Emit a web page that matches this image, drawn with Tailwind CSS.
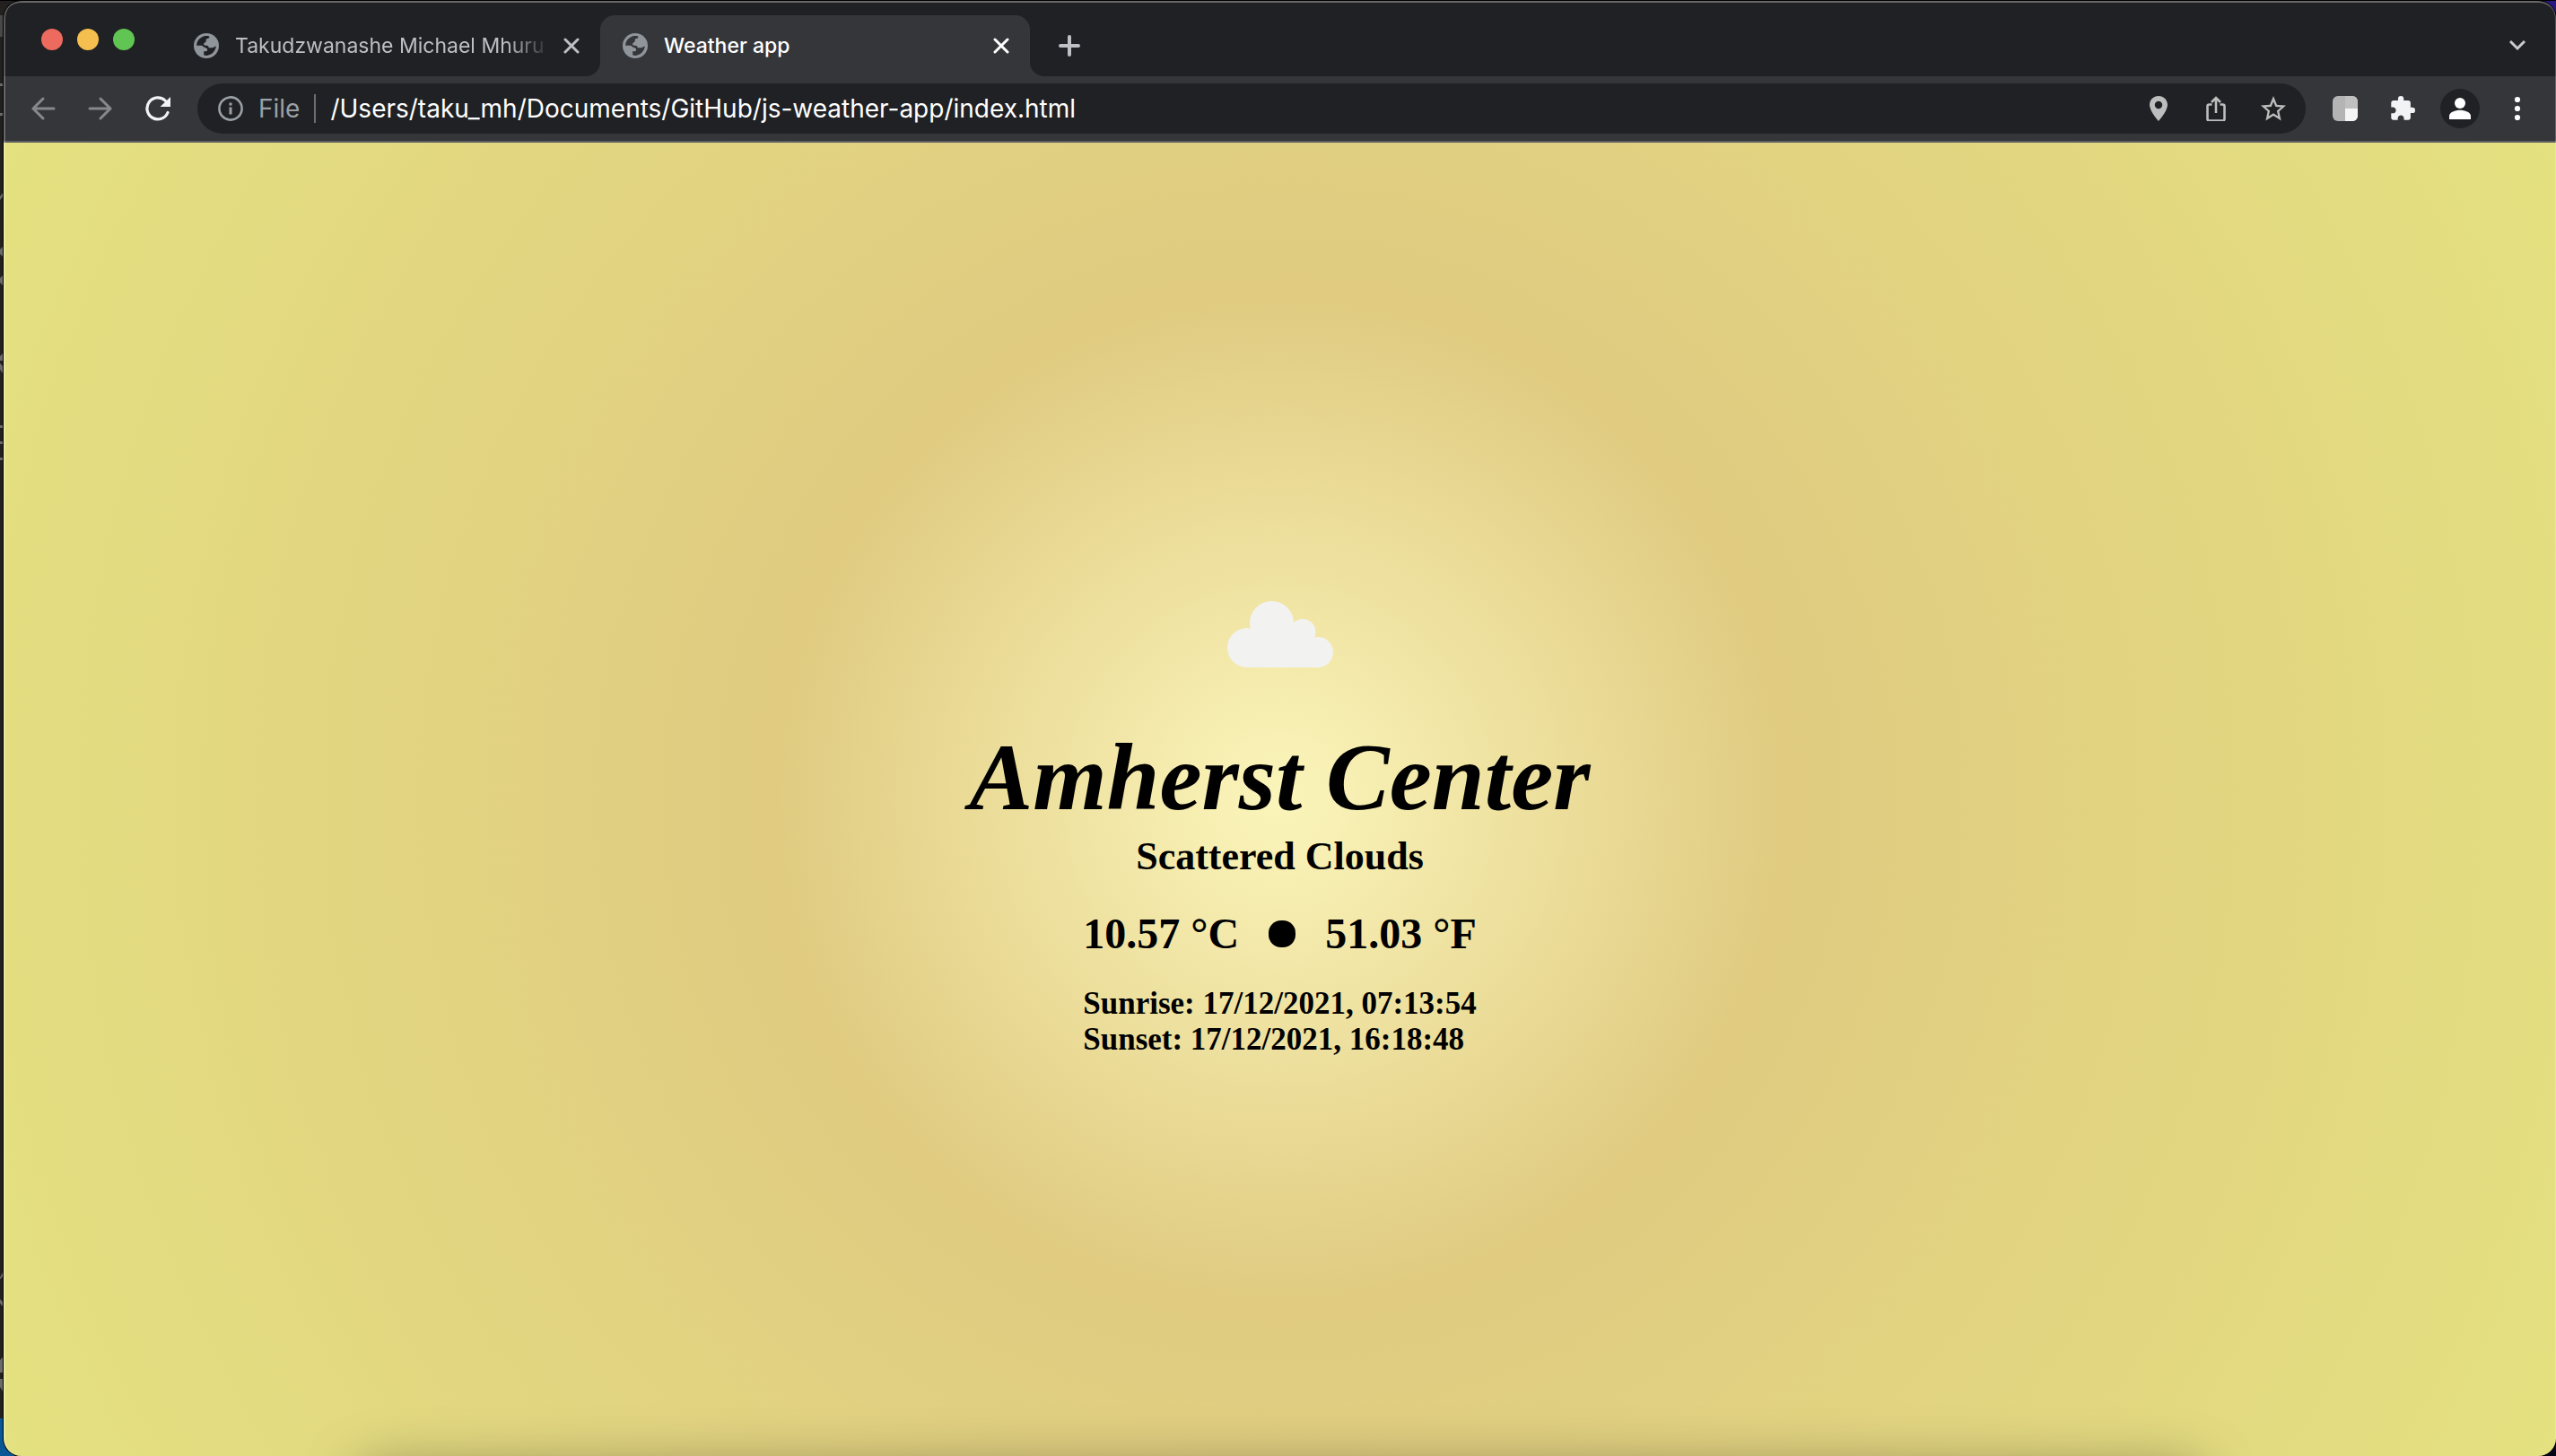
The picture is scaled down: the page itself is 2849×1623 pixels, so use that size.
<!DOCTYPE html>
<html lang="en">
<head>
<meta charset="utf-8">
<title>Weather app</title>
<script src="https://cdn.jsdelivr.net/npm/@tailwindcss/browser@4"></script>
</head>
<body class="relative overflow-hidden bg-linear-to-b from-[#2a1680] to-[#07051a] font-[Inter,sans-serif]">
<svg class="hidden" aria-hidden="true">
  <symbol id="globe" viewBox="0 0 28 28">
    <circle cx="14" cy="14" r="14" fill="#8f959b"/>
    <path fill="var(--hole)" d="M11.500 3.300C12.500 3.100 15 2.800 17.300 3.400c.3 2-.9 2.600-2.500 2.600-1.200.2-1 2-1.200 3.200-.5 1.400-2.400 1-2.500 2.800 0 1.700 1.500 1.600 3.300 1.700 1.400.2 2.200 1 2.300 2.600h2.500c2 0 4-.9 5.600-2.100C24.500 19 21 23.500 16 24.600v.2c-1.600.3-3.200.1-4.700-.2l-.2-4.300c1.600-.2 3.500.4 4-1.200.4-1.900-.7-2.800-2.600-3.200-1.900-.5-2.300-2.100-4-2.200H3.100C3.200 9 6.500 5 11.500 3.300z"/>
  </symbol>
  <symbol id="close" viewBox="0 0 18 18">
    <path d="M2 2l14 14M16 2L2 16" fill="none" stroke="currentColor" stroke-width="3" stroke-linecap="round"/>
  </symbol>
</svg>

<!-- desktop behind the window -->
<div class="absolute inset-y-0 left-0 flex w-10 flex-col bg-[#23211f]" aria-hidden="true">
  <svg class="h-[1581px] w-1" viewBox="0 0 4 1581" fill="#6b6b6b"><path d="M0 17h3v24H0z" fill="#484848"/><path d="M0 93h3v3H0zM0 126h3v3H0zM0 219l3-4v4l-3 4zM0 278l3-3v11l-3-3zM0 310l3-3v11l-3-3zM0 397l3-3v8H0zM0 405l3 3v8l-3-4zM0 474h3v3H0zM0 492h3v3H0zM0 510h3v3H0zM0 1424l3-6v5l-3 3zM0 1448l3 3v5l-3-3zM0 1516l3-3v17H0zM0 1537h3v14l-3-5z"/></svg>
  <div class="grow bg-[#0a5796]"></div>
</div>
<div class="absolute inset-x-0 top-0 h-px bg-black" aria-hidden="true"></div>

<div class="relative min-h-screen pl-1 pt-px">
  <div class="relative flex min-h-[calc(100vh-1px)] flex-col overflow-hidden rounded-[20px] bg-[#202124] shadow-[0_0_0_1px_#000]">
    <header>
      <div class="flex h-21 items-center bg-[#202124]">
        <div class="flex w-[202px] shrink-0 items-center gap-4 pl-[42px] pr-3 pt-0.5">
          <button aria-label="Close window" class="size-6 rounded-full bg-[#ed6a5e]"></button>
          <button aria-label="Minimise window" class="size-6 rounded-full bg-[#f5bf4f]"></button>
          <button aria-label="Zoom window" class="size-6 rounded-full bg-[#61c554]"></button>
        </div>
        <div class="flex h-full w-[463px] shrink-0 items-center pl-[10px] pt-4 text-[23px] leading-8 text-[#bcbfc3] [--hole:#202124]">
          <div class="flex h-[68px] w-full items-center">
            <svg class="size-7 shrink-0"><use href="#globe"/></svg>
            <span class="ml-[18px] w-[352px] overflow-hidden whitespace-nowrap [mask-image:linear-gradient(to_right,black_86%,transparent)]">Takudzwanashe Michael Mhuru</span>
            <button aria-label="Close tab" class="ml-[14px]"><svg class="size-[18px]"><use href="#close"/></svg></button>
          </div>
        </div>
        <div class="relative flex h-[68px] w-[479px] shrink-0 items-center self-end rounded-t-2xl bg-[#35363a] pl-[25px] pr-[23px] text-[23px] leading-8 text-white [--hole:#35363a]">
          <svg class="absolute bottom-0 right-full size-4" viewBox="0 0 16 16" fill="#35363a"><path d="M16 0v16H0A16 16 0 0 0 16 0z"/></svg>
          <svg class="size-7 shrink-0"><use href="#globe"/></svg>
          <span class="ml-[18px] grow font-medium">Weather app</span>
          <button aria-label="Close tab"><svg class="size-[18px]"><use href="#close"/></svg></button>
          <svg class="absolute bottom-0 left-full size-4" viewBox="0 0 16 16" fill="#35363a"><path d="M0 0v16h16A16 16 0 0 1 0 0z"/></svg>
        </div>
        <button aria-label="New tab" class="ml-8 pt-4"><svg class="size-6" viewBox="0 0 24 24" stroke="#bdc1c6" stroke-width="4" stroke-linecap="round"><path d="M12 2v20M2 12h20"/></svg></button>
        <button aria-label="Search tabs" class="ml-auto mr-[34px] pt-4"><svg class="h-3 w-[18px]" viewBox="0 0 18 12" fill="none" stroke="#c8cacd" stroke-width="3"><path d="M1 1l8 8 8-8"/></svg></button>
      </div>

      <div class="flex h-[74px] items-center border-b-2 border-[#5c5e62] bg-[#35363a] pl-[30px] pr-[29px]">
        <nav class="flex gap-9">
          <button aria-label="Back"><svg class="size-7" viewBox="0 0 28 28" fill="none" stroke="#87888b" stroke-width="3" stroke-linecap="round"><path d="M26 14H3M14 3L3 14l11 11"/></svg></button>
          <button aria-label="Forward"><svg class="size-7" viewBox="0 0 28 28" fill="none" stroke="#87888b" stroke-width="3" stroke-linecap="round"><path d="M2 14h23M14 3l11 11-11 11"/></svg></button>
          <button aria-label="Reload"><svg class="size-7" viewBox="0 0 28 28"><path d="M25 18.500A12 12 0 1 1 22.500 5.500" fill="none" stroke="#f1f3f4" stroke-width="3.200" stroke-linecap="round"/><path d="M28 1v11H16.500z" fill="#f1f3f4"/></svg></button>
        </nav>
        <div class="ml-[30px] flex h-14 grow items-center rounded-full bg-[#202124] pl-[23px] pr-[22px]">
          <svg class="size-7" viewBox="0 0 28 28"><circle cx="14" cy="14" r="12.600" fill="none" stroke="#9aa0a6" stroke-width="2.600"/><path fill="#9aa0a6" d="M12.500 7.500h3v3h-3zM12.500 12.500h3v8h-3z"/></svg>
          <label for="url" class="ml-[17px] border-r-2 border-[#6b6e72] pr-4 text-[28px] leading-8 text-[#9aa0a6]">File</label>
          <input id="url" type="text" value="/Users/taku_mh/Documents/GitHub/js-weather-app/index.html" class="ml-4 min-w-0 grow bg-transparent text-[28px] leading-8 text-white outline-none">
          <div class="flex gap-9">
            <button aria-label="Location"><svg class="size-7" viewBox="0 0 28 28"><path fill="#bdbdbd" fill-rule="evenodd" d="M14 0C8.300 0 4 4.300 4 9.800 4 17 14 28 14 28s10-11 10-18.200C24 4.300 19.700 0 14 0zm0 5.800a4.200 4.200 0 1 1 0 8.400 4.200 4.200 0 0 1 0-8.400z"/></svg></button>
            <button aria-label="Share"><svg class="size-7" viewBox="0 0 28 28" fill="none" stroke="#bdbdbd" stroke-width="2.600"><path d="M9.500 9.500H6.500a2 2 0 0 0-2 2v14a2 2 0 0 0 2 2h15a2 2 0 0 0 2-2v-14a2 2 0 0 0-2-2h-3M14 19V2.500M9 7l5-5 5 5"/></svg></button>
            <button aria-label="Bookmark"><svg class="size-7" viewBox="0 0 24 24" fill="#bdbdbd"><path d="M24 9.100l-8.600-.7L12 0 8.600 8.400 0 9.100l6.500 5.700L4.600 23.500 12 18.900l7.400 4.600-1.900-8.700L24 9.100zM12 16.600l-4.500 2.700 1.200-5.200-4-3.400 5.300-.4L12 5.400l2 4.900 5.300.4-4 3.500 1.200 5.100L12 16.600z"/></svg></button>
          </div>
        </div>
        <div class="ml-[30px] flex items-center gap-9">
          <button aria-label="Extension" class="relative size-7 overflow-hidden rounded-[6px] bg-[#b4b4b4]"><span class="absolute inset-y-0 left-1/2 right-0 bg-[#c0c0c0]"></span><span class="absolute bottom-0 left-1/2 right-0 top-1/2 bg-[#f5f5f5]"></span></button>
          <button aria-label="Extensions"><svg class="size-7" viewBox="1 1 22 22" fill="#f1f3f4"><path d="M20.500 11H19V7c0-1.100-.9-2-2-2h-4V3.500a2.500 2.500 0 0 0-5 0V5H4c-1.100 0-2 .9-2 2v3.800h1.500c1.500 0 2.700 1.200 2.700 2.700S5 16.200 3.500 16.200H2V20c0 1.100.9 2 2 2h3.800v-1.500c0-1.500 1.200-2.700 2.700-2.700s2.700 1.200 2.700 2.700V22H17c1.100 0 2-.9 2-2v-4h1.500a2.500 2.500 0 0 0 0-5z"/></svg></button>
          <button aria-label="Profile" class="-mx-2 flex size-11 items-center justify-center rounded-full bg-[#202124]"><svg class="size-6" viewBox="0 0 24 24" fill="#fff"><circle cx="12" cy="6" r="6"/><path d="M0 24v-3.500C0 16 7 13.800 12 13.800S24 16 24 20.500V24z"/></svg></button>
          <button aria-label="Menu"><svg class="size-7" viewBox="0 0 28 28" fill="#fff"><circle cx="14" cy="4" r="3.100"/><circle cx="14" cy="14" r="3.100"/><circle cx="14" cy="24" r="3.100"/></svg></button>
        </div>
      </div>
    </header>

    <main class="relative flex grow flex-col items-center justify-center overflow-hidden bg-[radial-gradient(circle,#fbf5bb_0%,#e0cb81_35%,#e4e180_100%)] pt-1 font-['Liberation_Serif',serif] font-bold text-black">
      <div class="flex size-50 items-center justify-center">
        <svg class="h-[74px] w-[118px]" viewBox="0 0 118 74" fill="#f2f2f0" role="img" aria-label="Cloud"><circle cx="22" cy="52" r="22"/><circle cx="49.500" cy="24.500" r="24.500"/><circle cx="84" cy="34.500" r="14.500"/><circle cx="101" cy="57" r="17"/><path d="M22 40L50 20l34 14 17 10v30H22z"/></svg>
      </div>
      <h1 class="text-[106px] italic leading-[120px]">Amherst Center</h1>
      <h2 class="text-[44px] leading-14">Scattered Clouds</h2>
      <div class="mt-7">
        <p class="flex items-center justify-between text-5xl leading-[60px]">
          <span>10.57 °C</span>
          <span class="size-[30px] rounded-[14px] bg-black"></span>
          <span>51.03 °F</span>
        </p>
        <p class="mt-7 text-[35px] leading-10">Sunrise: 17/12/2021, 07:13:54<br>Sunset: 17/12/2021, 16:18:48</p>
      </div>
      <!-- shade cast by the dock -->
      <div class="absolute left-[14%] right-[14%] top-full mt-4 h-24 shadow-[0_0_64px_rgba(0,0,0,0.4)]" aria-hidden="true"></div>
    </main>
    <div class="pointer-events-none absolute inset-0 rounded-[20px] border-l-2 border-r border-white/25" aria-hidden="true"></div>
    <div class="pointer-events-none absolute inset-x-0 top-0 h-10 rounded-t-[20px] border-t-2 border-[#67676a]" aria-hidden="true"></div>
  </div>
</div>
</body>
</html>
